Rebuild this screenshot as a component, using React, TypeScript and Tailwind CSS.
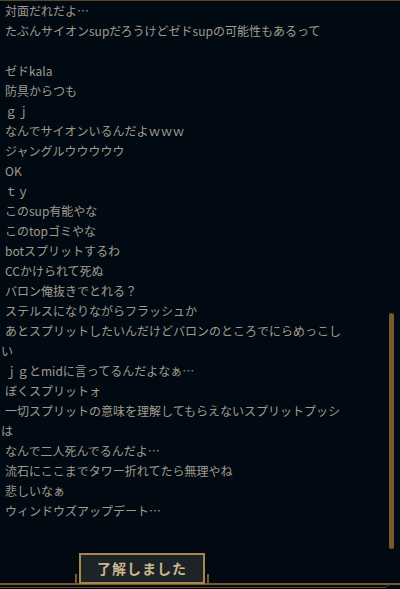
import React from "react";

const messages = [
  "対面だれだよ…",
  "たぶんサイオンsupだろうけどゼドsupの可能性もあるって",
  "",
  "ゼドkala",
  "防具からつも",
  "ｇｊ",
  "なんでサイオンいるんだよｗｗｗ",
  "ジャングルウウウウウ",
  "OK",
  "ｔｙ",
  "このsup有能やな",
  "このtopゴミやな",
  "botスプリットするわ",
  "CCかけられて死ぬ",
  "バロン俺抜きでとれる？",
  "ステルスになりながらフラッシュか",
  "あとスプリットしたいんだけどバロンのところでにらめっこしい",
  "ｊｇとmidに言ってるんだよなぁ…",
  "ぼくスプリットォ",
  "一切スプリットの意味を理解してもらえないスプリットプッシは",
  "なんで二人死んでるんだよ…",
  "流石にここまでタワー折れてたら無理やね",
  "悲しいなぁ",
  "ウィンドウズアップデート…",
];

export default function App() {
  return (
    <div
      className="w-[400px] h-[589px] bg-[#010a13] border-t border-[#5b4520] overflow-hidden flex flex-col"
      style={{ fontFamily: '"Noto Sans CJK JP", "Noto Sans", sans-serif' }}
    >
      {/* Chat log */}
      <div className="h-[549px] flex">
        <div className="w-[346px] pl-px text-[12px] leading-5 text-[#a09b8c]">
          {messages.map((m, i) => (
            <p key={i} className="indent-1 min-h-5">
              {m}
            </p>
          ))}
        </div>
        <div className="flex-1 flex justify-end pr-[6px]">
          <div className="w-[5px] mt-[312px] h-[236px] rounded-full bg-[#7a5a2a]" />
        </div>
      </div>

      {/* Footer frame + button */}
      <div className="relative h-[39px]">
        <svg className="absolute inset-0" width="400" height="39" viewBox="0 0 400 39">
          <rect x="0" y="33" width="400" height="2" fill="#785a28" />
          <rect x="75" y="24" width="2" height="10" fill="#785a28" />
          <rect x="207" y="24" width="2" height="10" fill="#785a28" />
          <path d="M0 37.5 H386 L389 34.5" stroke="#5e4a2a" strokeWidth="1" fill="none" />
        </svg>
        <button className="relative ml-[79px] mt-[3px] w-[126px] h-[31px] border-2 border-[#a8884a] bg-[#1e2328] text-[#c8b88c] text-[14px] font-bold tracking-[1px] flex items-center justify-center">
          了解しました
        </button>
      </div>
    </div>
  );
}
